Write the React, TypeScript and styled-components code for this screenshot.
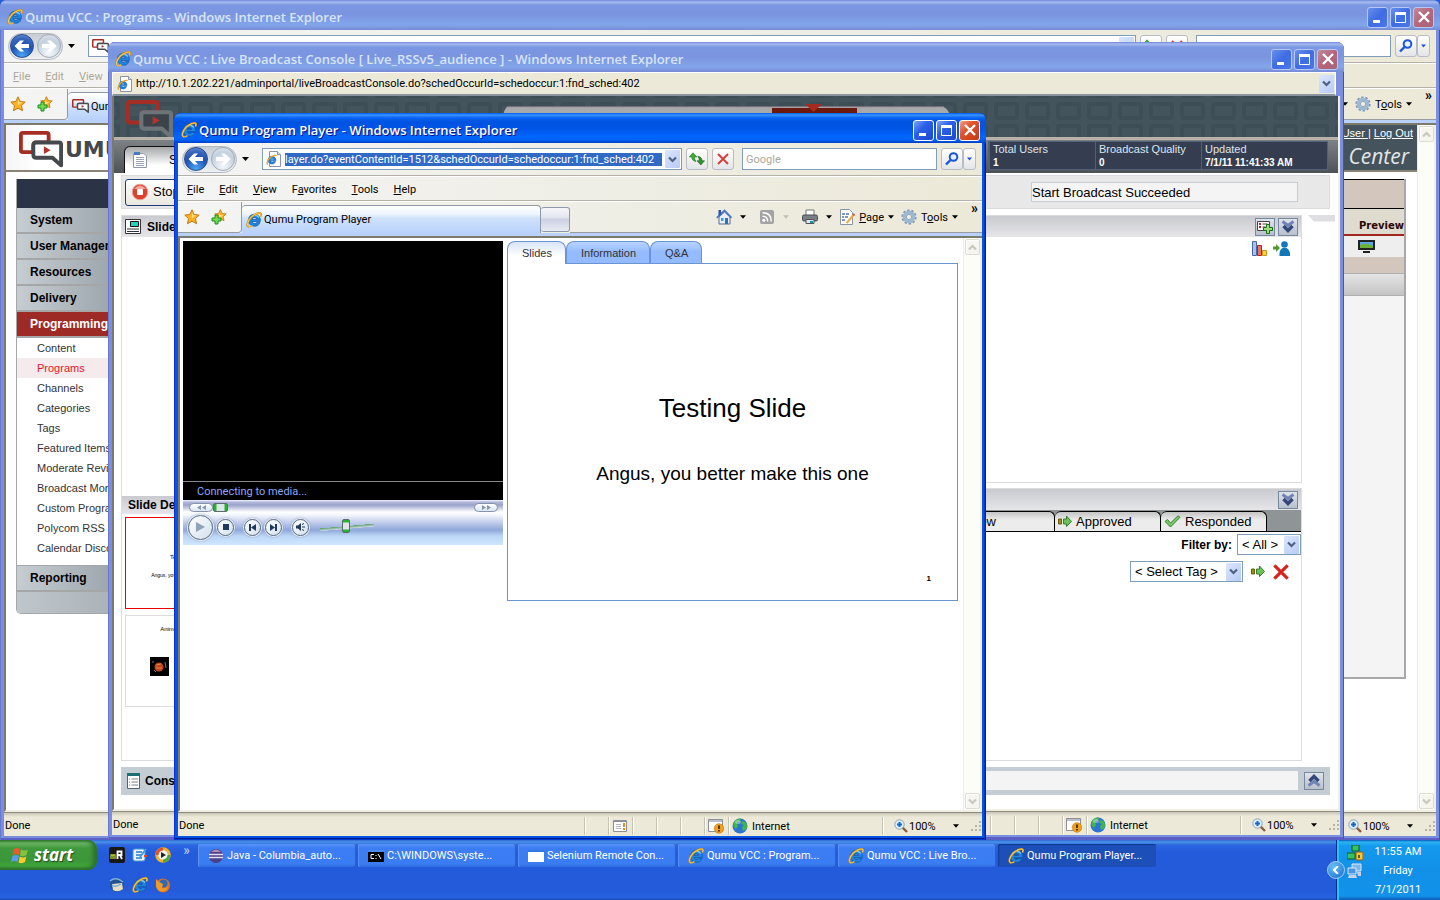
import React from 'react';
import styled, { createGlobalStyle, css } from 'styled-components';

const ui = `Roboto, "Noto Sans", sans-serif`;
const arial = `"Liberation Sans", Arial, sans-serif`;

const GlobalStyle = createGlobalStyle`
  * { box-sizing: border-box; }
  body { margin: 0; font-family: ${ui}; font-size: 11px; color: #000; overflow: hidden; }
  button, input, select { font: inherit; color: inherit; margin: 0; padding: 0; }
  button { background: none; border: 0; white-space: nowrap; }
  a { color: inherit; text-decoration: none; }
  h1, h2, p, ul { margin: 0; padding: 0; font-weight: inherit; }
  ul { list-style: none; }
  svg { display: block; flex: none; }
`;

/* ---------- desktop and window frame ---------- */

const Desktop = styled.div`
  display: flex;
  flex-direction: column;
  height: 100vh;
  min-height: 700px;
  background: #245edb;
`;

const Workspace = styled.main`
  position: relative;
  flex: 1;
  min-height: 0;
`;

const Frame = styled.section<{ $active?: boolean; $inset: string }>`
  position: absolute;
  inset: ${p => p.$inset};
  display: flex;
  flex-direction: column;
  padding: 0 4px 4px;
  border-radius: 7px 7px 0 0;
  overflow: hidden;
  background: ${p => (p.$active ? '#0855dd' : '#7b8fe0')};
  box-shadow: ${p => (p.$active
    ? 'inset 1px 0 #0831d9, inset -1px 0 #001ea0, inset -2px -1px #0439d0, inset 0 -2px #001590'
    : 'inset 1px 0 #6678d0, inset -1px 0 #4a4fb4, inset 0 -2px #5a60c4')};
`;

const TitleBar = styled.header<{ $active?: boolean }>`
  display: flex;
  align-items: center;
  gap: 2px;
  flex: none;
  height: 30px;
  margin: 0 -4px;
  padding: 4px 6px 0 7px;
  color: ${p => (p.$active ? '#fff' : '#d8e4f8')};
  text-shadow: ${p => (p.$active ? '1px 1px #0f1089' : 'none')};
  background: ${p => (p.$active
    ? 'linear-gradient(#0058e6 0, #3a93ff 2px, #0562f0 5px, #0053e0 9px, #0055e8 16px, #0066ff 24px, #0061f5 27px, #003fc4 30px)'
    : 'linear-gradient(#6f86d8 0, #a6bcf2 2px, #7d98e2 5px, #7a94df 14px, #82a5ea 25px, #7f9be3 27px, #7689d4 30px)')};
`;

const Title = styled.h1`
  flex: 1;
  font: 600 13px/20px "Open Sans", "Noto Sans", sans-serif;
  white-space: nowrap;
  overflow: hidden;
`;

const Caption = styled.div`
  display: flex;
  gap: 2px;
`;

const CaptionButton = styled.button<{ $active?: boolean; $close?: boolean }>`
  display: grid;
  place-items: center;
  width: 21px;
  height: 21px;
  border: 1px solid ${p => (p.$active ? '#fff' : '#b5c8f4')};
  border-radius: 3px;
  background: ${p => (p.$close
    ? p.$active ? 'linear-gradient(135deg, #f0a088, #e2502c 40%, #c33a10)' : 'linear-gradient(135deg, #c08a9c, #b4667a 50%, #a86478)'
    : p.$active ? 'linear-gradient(135deg, #7aa4f5, #2c5fe8 40%, #1a48cf)' : 'linear-gradient(135deg, #6a90ee, #3f6ce2 50%, #4a78ea)')};
`;

/* ---------- Internet Explorer chrome ---------- */

const chrome = css`background: linear-gradient(90deg, #f4f4f4, #efeee6 50%, #ece9d8);`;

const AddressRow = styled.div`
  ${chrome}
  display: flex;
  align-items: center;
  flex: none;
  height: 33px;
  padding: 0 6px 0 4px;
  border-bottom: 1px solid #b4b2a8;
`;

const NavPair = styled.div`
  display: flex;
  align-items: center;
  gap: 3px;
  height: 27px;
  padding: 0 1px;
  border-radius: 14px;
  border: 1px solid #b4bac2;
  background: linear-gradient(#c8cdd4, #eef0f2);
`;

const RoundButton = styled.button<{ $blue?: boolean }>`
  display: grid;
  place-items: center;
  width: 24px;
  height: 24px;
  border-radius: 50%;
  border: 1px solid ${p => (p.$blue ? '#2a4a8c' : '#a4abb5')};
  background: ${p => (p.$blue
    ? 'radial-gradient(circle at 50% 95%, #4aa8f4, #1e52b4 50%, #3a68bc 75%, #7ea0dc)'
    : 'radial-gradient(circle at 50% 80%, #f6fafd, #c3d0df 60%, #e4eaf0)')};
`;

const HistoryButton = styled.button`
  display: grid;
  place-items: center;
  width: 16px;
  height: 20px;
  margin-right: 9px;
`;

const Field = styled.div<{ $grow?: boolean }>`
  display: flex;
  align-items: center;
  gap: 3px;
  flex: ${p => (p.$grow ? '1' : '0 0 195px')};
  min-width: 0;
  height: 22px;
  padding: 0 1px 0 3px;
  border: 1px solid #7f9db9;
  background: #fff;
`;

const FieldInput = styled.input<{ $selected?: boolean }>`
  flex: 1;
  min-width: 0;
  height: 13px;
  border: 0;
  outline: 0;
  line-height: 13px;
  color: ${p => (p.$selected ? '#fff' : '#000')};
  background: ${p => (p.$selected ? '#316ac5' : 'transparent')};
  &::placeholder { color: #aca899; opacity: 1; }
`;

const DropButton = styled.span`
  display: grid;
  place-items: center;
  flex: none;
  width: 15px;
  height: 18px;
  border-radius: 1px;
  background: linear-gradient(135deg, #dbe6fd, #b8cbf6);
`;

const SquareButton = styled.button<{ $w?: number }>`
  display: grid;
  place-items: center;
  flex: none;
  width: ${p => p.$w ?? 22}px;
  height: 22px;
  border: 1px solid #b8bcc6;
  border-radius: 3px;
  background: linear-gradient(#fff, #f2f2f0 50%, #e4e5ea);
`;

const AddressTools = styled.div`
  display: flex;
  gap: 4px;
  margin: 0 8px 0 4px;
`;

const SearchTools = styled.div`
  display: flex;
  margin-left: 4px;
`;

const MenuRow = styled.nav<{ $dim?: boolean }>`
  ${chrome}
  display: flex;
  align-items: center;
  gap: 15px;
  flex: none;
  height: 25px;
  padding: 1px 0 0 9px;
  border-top: 1px solid #fff;
  border-bottom: 1px solid #b4b2a8;
  color: ${p => (p.$dim ? '#aca899' : '#000')};
`;

const TabRow = styled.div`
  ${chrome}
  display: flex;
  flex: none;
  height: 32px;
  border-top: 1px solid #fff;
`;

const Favorites = styled.div`
  display: flex;
  align-items: center;
  gap: 11px;
  flex: 0 0 64px;
  padding-left: 6px;
  border-bottom: 1px solid #9a9ca4;
  border-right: 1px solid #8f97ab;
  border-bottom-right-radius: 4px;
`;

const BrowserTab = styled.button`
  display: flex;
  align-items: center;
  gap: 2px;
  flex: 0 1 299px;
  min-width: 0;
  margin-top: 3px;
  padding-left: 4px;
  border: 1px solid #8f97ab;
  border-width: 1px 1px 0 0;
  border-radius: 4px 4px 0 0;
  background: linear-gradient(#fff, #eef5fe 30%, #cfe2fb 45%, #b9d2fb);
`;

const NewTab = styled.button`
  flex: 0 0 29px;
  margin: 5px 0 1px;
  border: 1px solid #8f97ab;
  border-left: 0;
  border-radius: 3px;
  background: linear-gradient(#f6f6fa, #e4e6f0 40%, #cdd1e4 50%, #e9ebf3);
`;

const CommandBar = styled.div`
  display: flex;
  flex: 1;
  align-items: center;
  justify-content: flex-end;
  gap: 7px;
  padding-right: 4px;
  border-bottom: 1px solid #9a9ca4;
`;

const CommandGroup = styled.div`
  display: flex;
  gap: 13px;
`;

const Command = styled.button<{ $label?: boolean }>`
  display: flex;
  align-items: center;
  gap: ${p => (p.$label ? 4 : 8)}px;
`;

const More = styled.button`
  align-self: flex-start;
  margin-left: 6px;
  font: 700 14px/12px ${ui};
`;

const TabStripe = styled.div`
  flex: none;
  height: 5px;
  border-bottom: 2px solid #7d7a6c;
  background: #b9d0f9;
`;

const Viewport = styled.div`
  display: flex;
  flex: 1;
  min-height: 0;
  border-left: 2px solid #7d7a6c;
  border-right: 2px solid #f1efe2;
  border-bottom: 2px solid #f1efe2;
  background: #fff;
`;

const Page = styled.div`
  display: flex;
  flex-direction: column;
  flex: 1;
  min-width: 0;
  overflow: hidden;
  font-family: ${arial};
`;

const ScrollTrack = styled.div`
  display: flex;
  flex-direction: column;
  justify-content: space-between;
  flex: 0 0 17px;
  padding: 1px 0 1px 1px;
  background: #fdfdf8;
  border-left: 1px solid #eeede5;
`;

const ScrollButton = styled.button`
  display: grid;
  place-items: center;
  height: 16px;
  border: 1px solid #dddcd0;
  border-radius: 2px;
  background: #f6f5ee;
  box-shadow: inset 1px 1px #fff;
`;

const StatusRow = styled.footer`
  display: flex;
  flex: none;
  height: 24px;
  padding-top: 2px;
  border-top: 1px solid #8e8b7e;
  background: linear-gradient(#c9c6b8 0, #ece9d8 4px, #ece9d8);
`;

const StatusText = styled.p`
  flex: 1;
  padding-left: 1px;
  line-height: 22px;
`;

const StatusCell = styled.div<{ $w?: number }>`
  display: flex;
  align-items: center;
  gap: 4px;
  flex: 0 0 ${p => p.$w ?? 24}px;
  height: 18px;
  margin-top: 2px;
  padding-left: 3px;
  border-left: 1px solid #c5c2b4;
  box-shadow: inset 1px 0 #fff;
`;

const ZoomButton = styled.button`
  display: flex;
  align-items: center;
  flex: 1;
  gap: 1px;
  padding-left: 8px;
  & > :last-child { margin-left: 16px; }
`;

/* ---------- icons ---------- */

const IeIcon = ({ size = 16 }: { size?: number }) => (
  <svg width={size} height={size} viewBox="0 0 16 16">
    <path d="M8.200 2.200a6 6 0 0 1 6.100 7.300H6q.4 2 2.600 2 1.300 0 2-.9h3.400a6 6 0 1 1-5.800-8.400zM6 7.400h4.700Q10.300 5.400 8.400 5.400T6 7.400z" fill="#1f86e0" stroke="#1158a8" strokeWidth=".7" />
    <path d="M4 6.500Q5.500 3.400 8.500 3.300t4.500 2.200" fill="none" stroke="#7fd0fa" strokeWidth="1.200" />
    <path d="M3 14.800C.2 14.800.8 9.500 5.200 5.200 9 1.500 14 .2 14.900 1.700c.4.7.2 1.700-.4 2.800" fill="none" stroke="#c98312" strokeWidth="1.900" />
    <path d="M3 14.600C.4 14.400 1 9.500 5.200 5.200 9 1.500 14 .2 14.900 1.700c.3.700.1 1.500-.5 2.500" fill="none" stroke="#f8cb3e" strokeWidth="1.100" />
    <path d="M2.500 14.700q1.500.6 4-1" fill="none" stroke="#f0b52c" strokeWidth="1.400" />
  </svg>
);

const PageIe = () => (
  <svg width="16" height="16" viewBox="0 0 16 16">
    <path d="M3.500.5h8l3 3v12h-11z" fill="#fff" stroke="#8b93a5" />
    <path d="M11.500.5v3h3" fill="#dfe3ea" stroke="#8b93a5" />
    <path d="M6 5.200a3.900 3.900 0 0 1 3.900 4.600H4.400q.3 1.200 1.700 1.200.8 0 1.300-.5h2.200A3.900 3.900 0 1 1 6 5.200zM4.400 8.400h3.200Q7.300 7.200 6 7.200T4.400 8.400z" fill="#1e7fdc" stroke="#1463b8" strokeWidth=".5" />
    <path d="M2 13.500C.3 13 1 9.500 4 6.800c2.600-2.300 6-3 6.300-1.800" fill="none" stroke="#e8a31c" strokeWidth="1.300" />
  </svg>
);

const QumuMark = ({ w, line, fill = '#fff' }: { w: number; line: string; fill?: string }) => (
  <svg width={w} height={(w * 40) / 46} viewBox="0 0 46 40">
    <path d="M4 2h25q2 0 2 2v8H18q-3 0-3 3v7H4q-2 0-2-2V4q0-2 2-2z" fill="none" stroke="#a52d24" strokeWidth="4" />
    <path d="M18 12h24q2 0 2 2v22l-9-8H18q-3 0-3-3V15q0-3 3-3z" fill={fill} stroke={line} strokeWidth="4" strokeLinejoin="round" />
    <path d="M26 16l7 4-7 4z" fill="#b5332a" />
  </svg>
);

const Arrow = ({ flip, color = '#fff' }: { flip?: boolean; color?: string }) => (
  <svg width="16" height="14" viewBox="0 0 16 14">
    <path d={flip ? 'M1 5h8L6 1.500h4L15.500 7 10 12.500H6L9 9H1z' : 'M15 5H7l3-3.500H6L.5 7 6 12.500h4L7 9h8z'} fill={color} />
  </svg>
);

const Caret = ({ color = '#000', w = 7 }: { color?: string; w?: number }) => (
  <svg width={w} height="4" viewBox="0 0 7 4"><path d="M0 0h7L3.500 4z" fill={color} /></svg>
);

const Chevron = ({ up, color = '#4d6185' }: { up?: boolean; color?: string }) => (
  <svg width="9" height="7" viewBox="0 0 9 7">
    <path d={up ? 'M1 5.500l3.500-3.500L8 5.500' : 'M1 1.500L4.500 5 8 1.500'} fill="none" stroke={color} strokeWidth="2.200" />
  </svg>
);

const Magnifier = () => (
  <svg width="14" height="14" viewBox="0 0 14 14">
    <circle cx="8.500" cy="5" r="3.800" fill="#e9f1ff" stroke="#1b55d8" strokeWidth="2" />
    <path d="M5.500 8L1 12.500" stroke="#1b55d8" strokeWidth="2.400" />
  </svg>
);

const Refresh = () => (
  <svg width="16" height="14" viewBox="0 0 16 14">
    <path d="M4 .8L7.800 5H5.500q-.2 2.500 1.500 4.500Q2.800 8.800 2.700 5H.3z" fill="#3fae35" stroke="#1f7a22" strokeWidth=".6" />
    <path d="M11.800 13L8 8.800h2.300q.2-2.500-1.500-4.500 4.200.7 4.300 4.500h2.400z" fill="#2f932c" stroke="#1a661c" strokeWidth=".6" />
  </svg>
);

const Cross = ({ size = 12, color = '#d2413c', width = 2 }: { size?: number; color?: string; width?: number }) => (
  <svg width={size} height={size} viewBox="0 0 12 12">
    <path d="M1 1l10 10M11 1L1 11" stroke={color} strokeWidth={width} />
  </svg>
);

const starPath = 'M8 .8l2.200 4.700 5 .6-3.700 3.500 1 5.100L8 12.200l-4.500 2.500 1-5.100L.8 6.100l5-.6z';
const Star = ({ plus }: { plus?: boolean }) => (
  <svg width="16" height="16" viewBox="0 0 16 16">
    <path d={starPath} fill="#fbb224" stroke="#c07a14" strokeLinejoin="round" transform={plus ? 'translate(3 0) scale(.8)' : undefined} />
    <path d="M8 3l1.200 3 3 .5L8 9z" fill="#fff0a8" opacity=".7" />
    {plus && <path d="M4 6h3v3h3v3H7v3H4v-3H1V9h3z" fill="#6fdc4e" stroke="#1f8a24" />}
  </svg>
);

const Home = () => (
  <svg width="16" height="16" viewBox="0 0 16 16">
    <path d="M3 8v7h11V8L8.500 3z" fill="#e9eef7" stroke="#5d6f8e" />
    <path d="M.8 8.800L8.500 1.500l7 7.300" fill="none" stroke="#4a77c8" strokeWidth="1.800" />
    <path d="M2.500 1h2.500v4l-2.500 2z" fill="#2a4fb0" />
    <path d="M9 9h3v6H9z" fill="#2f72b5" /><path d="M5 9h2.500v3H5z" fill="#35a0d8" />
  </svg>
);

const Rss = () => (
  <svg width="16" height="16" viewBox="0 0 16 16">
    <rect x="1" y="1" width="14" height="14" rx="2" fill="#a3a3a3" />
    <circle cx="4.800" cy="11.300" r="1.500" fill="#fff" />
    <path d="M3.500 7.200q5.200 0 5.200 5.300M3.500 3.800q8.800 0 8.800 8.700" fill="none" stroke="#fff" strokeWidth="1.500" />
  </svg>
);

const Printer = () => (
  <svg width="16" height="16" viewBox="0 0 16 16">
    <path d="M4 1h8v6H4z" fill="#fff" stroke="#777" />
    <rect x=".5" y="6" width="15" height="6" rx="1.500" fill="#7b7f86" stroke="#484b50" />
    <path d="M4 10.500h8v4H4z" fill="#dbe7f2" stroke="#555" /><path d="M8 12h3v2H8z" fill="#1f8f9c" />
  </svg>
);

const PageEdit = () => (
  <svg width="16" height="16" viewBox="0 0 16 16">
    <path d="M1.500.5h9l3 3v12h-12z" fill="#fff" stroke="#8b93a5" />
    <path d="M3 5h3M7 5h3M3 8h2M6 8h3M3 11h3" stroke="#5376b4" strokeWidth="1.400" />
    <path d="M14.500 6L9 12.500l-1.500 1.500" stroke="#e2b04a" strokeWidth="2.200" /><path d="M14 5l1.500 1.500" stroke="#c95a4a" strokeWidth="2" />
  </svg>
);

const Gear = () => (
  <svg width="16" height="16" viewBox="0 0 16 16">
    <circle cx="8" cy="8" r="6.600" fill="none" stroke="#7f97b2" strokeWidth="2" strokeDasharray="2.400 1.750" />
    <circle cx="8" cy="8" r="4.600" fill="none" stroke="#9db8d3" strokeWidth="3.400" />
    <circle cx="8" cy="8" r="2.600" fill="#f2efe2" stroke="#7993b0" strokeWidth=".8" />
  </svg>
);

const Globe = () => (
  <svg width="16" height="16" viewBox="0 0 16 16">
    <circle cx="8" cy="8" r="7.500" fill="#2c73d2" />
    <path d="M2 4q3-4 7-3.400l-1 3-3 1.500L6 8 4 11Q0 8 2 4zM10 3l4 1.500q2 4 0 7L11 13l-1-4 2-2-3-1z" fill="#44b54a" />
    <ellipse cx="6" cy="4" rx="3" ry="2" fill="#fff" opacity=".35" />
  </svg>
);

const PrivacyIcon = () => (
  <svg width="16" height="16" viewBox="0 0 16 16">
    <path d="M.5 1.500h14v12H.5z" fill="#fff" stroke="#8a8f98" /><path d="M1 2h13v2H1z" fill="#b9c0cc" />
    <circle cx="11" cy="10.500" r="4.800" fill="#f0a020" stroke="#c07a10" strokeWidth=".6" />
    <path d="M11 7.500v3.500M11 12v1.500" stroke="#4a2a00" strokeWidth="1.800" />
  </svg>
);

const PopupIcon = () => (
  <svg width="16" height="14" viewBox="0 0 16 14">
    <path d="M1.500 1.500h13v11h-13z" fill="#fff" stroke="#8a8f98" /><path d="M2 2.500h12" stroke="#8a8f98" />
    <path d="M4 5.500h5M4 7.500h5M4 9.500h5" stroke="#b6bac2" /><path d="M12 4v4M12 9v2" stroke="#ee8a1a" strokeWidth="2" />
  </svg>
);

const ZoomIcon = () => (
  <svg width="14" height="14" viewBox="0 0 14 14">
    <path d="M8.500 8.500L13 13" stroke="#8a5a3a" strokeWidth="2.400" />
    <circle cx="5.500" cy="5.500" r="4.700" fill="#dff0ff" stroke="#8aa2bc" /><path d="M5.500 3v5M3 5.500h5" stroke="#1466c8" strokeWidth="2" />
  </svg>
);

const Grip = () => (
  <svg width="12" height="12" viewBox="0 0 12 12">
    <path d="M9 1h2v2H9zM5 5h2v2H5zM9 5h2v2H9zM1 9h2v2H1zM5 9h2v2H5zM9 9h2v2H9z" fill="#b8b4a2" />
  </svg>
);

const DoubleChevron = ({ up }: { up?: boolean }) => (
  <svg width="14" height="13" viewBox="0 0 14 13">
    <g transform={up ? 'rotate(180 7 6.500)' : undefined} fill="none" strokeWidth="2.800">
      <path d="M1.500 1.500l5.500 4 5.500-4" stroke="#6f84b4" /><path d="M2.500 6l4.500 4.500L11.500 6" stroke="#34487c" strokeWidth="3.400" />
    </g>
  </svg>
);

const GreenArrow = () => (
  <svg width="14" height="13" viewBox="0 0 14 13">
    <path d="M.5 4h3v5h-3z" fill="#9a8a1a" stroke="#6a5f10" /><path d="M5.500 4h3V1l5 5.500-5 5V9h-3z" fill="#6cc25a" stroke="#3a7d2c" />
  </svg>
);

/* ---------- shared window pieces ---------- */

function WindowTitle({ text, active }: { text: string; active?: boolean }) {
  return (
    <TitleBar $active={active}>
      <IeIcon />
      <Title>{text}</Title>
      <Caption>
        <CaptionButton $active={active} aria-label="Minimize">
          <svg width="15" height="15"><path d="M3 10h7v3H3z" fill="#fff" /></svg>
        </CaptionButton>
        <CaptionButton $active={active} aria-label="Maximize">
          <svg width="15" height="15"><path d="M2.500 3.500h10v9h-10z" fill="none" stroke="#fff" /><path d="M2 2h11v3H2z" fill="#fff" /></svg>
        </CaptionButton>
        <CaptionButton $active={active} $close aria-label="Close"><Cross color="#fff" width={2.4} /></CaptionButton>
      </Caption>
    </TitleBar>
  );
}

const menus = [['', 'F', 'ile'], ['', 'E', 'dit'], ['', 'V', 'iew'], ['F', 'a', 'vorites'], ['', 'T', 'ools'], ['', 'H', 'elp']];

function BrowserChrome({ address, selected, icon, tabIcon, tab, dim, search }: {
  address: string; selected?: boolean; icon: React.ReactNode; tabIcon: React.ReactNode; tab: string; dim?: boolean; search?: string;
}) {
  return (
    <>
      <AddressRow>
        <NavPair>
          <RoundButton $blue aria-label="Back"><Arrow /></RoundButton>
          <RoundButton aria-label="Forward"><Arrow flip /></RoundButton>
        </NavPair>
        <HistoryButton aria-label="Recent pages"><Caret /></HistoryButton>
        <Field $grow>
          {icon}
          <FieldInput $selected={selected} aria-label="Address" defaultValue={address} />
          <DropButton><Chevron /></DropButton>
        </Field>
        <AddressTools>
          <SquareButton aria-label="Refresh"><Refresh /></SquareButton>
          <SquareButton aria-label="Stop"><Cross /></SquareButton>
        </AddressTools>
        <Field><FieldInput aria-label="Search" placeholder={search} /></Field>
        <SearchTools>
          <SquareButton aria-label="Search"><Magnifier /></SquareButton>
          <SquareButton $w={13} aria-label="Search options"><Caret color="#1b55d8" w={5} /></SquareButton>
        </SearchTools>
      </AddressRow>
      <MenuRow $dim={dim}>
        {menus.map(([a, u, b]) => <button key={u}>{a}<u>{u}</u>{b}</button>)}
      </MenuRow>
      <TabRow>
        <Favorites>
          <button aria-label="Favorites Center"><Star /></button>
          <button aria-label="Add to Favorites"><Star plus /></button>
        </Favorites>
        <BrowserTab>{tabIcon}{tab}</BrowserTab>
        <NewTab aria-label="New tab" />
        <CommandBar>
          <CommandGroup>
            <Command aria-label="Home"><Home /><Caret w={6} /></Command>
            <Command aria-label="Feeds"><Rss /><Caret w={6} color="#c0beb4" /></Command>
            <Command aria-label="Print"><Printer /><Caret w={6} /></Command>
          </CommandGroup>
          <Command $label><PageEdit /><span><u>P</u>age</span><Caret w={6} /></Command>
          <Command $label><Gear /><span>T<u>o</u>ols</span><Caret w={6} /></Command>
          <More aria-label="More commands">»</More>
        </CommandBar>
      </TabRow>
      <TabStripe />
    </>
  );
}

function StatusBar({ popup }: { popup?: boolean }) {
  return (
    <StatusRow>
      <StatusText>Done</StatusText>
      <StatusCell />
      <StatusCell>{popup && <PopupIcon />}</StatusCell>
      <StatusCell /><StatusCell /><StatusCell />
      <StatusCell><PrivacyIcon /></StatusCell>
      <StatusCell $w={154}><Globe />Internet</StatusCell>
      <StatusCell $w={100}>
        <ZoomButton><ZoomIcon />100%<Caret w={6} /></ZoomButton>
        <Grip />
      </StatusCell>
    </StatusRow>
  );
}

const VScroll = () => (
  <ScrollTrack>
    <ScrollButton aria-label="Scroll up"><Chevron up color="#c9c8bd" /></ScrollButton>
    <ScrollButton aria-label="Scroll down"><Chevron color="#c9c8bd" /></ScrollButton>
  </ScrollTrack>
);

/* ---------- programs page ---------- */

const SiteHeader = styled.header`
  display: flex;
  justify-content: space-between;
  flex: none;
  height: 47px;
  border-bottom: 2px solid #8b8378;
  background: linear-gradient(90deg, #f4f4f4, #fff 30px);
`;

const Brand = styled.div`
  display: flex;
  align-items: center;
  gap: 2px;
  padding: 5px 0 0 13px;
  font: 700 22px/40px "DejaVu Sans", sans-serif;
  color: #45484c;
`;

const SiteBanner = styled.div`
  display: flex;
  flex-direction: column;
  width: 50%;
  padding-right: 4px;
  text-align: right;
  color: #fff;
  background: #44535c;
`;

const UserLinks = styled.p`
  font-size: 11px;
  line-height: 16px;
  a { text-decoration: underline; }
`;

const BannerTitle = styled.p`
  padding-right: 4px;
  font: italic 21px/30px "Open Sans", "Noto Sans", sans-serif;
  color: #e4e6e8;
`;

const SiteBody = styled.div`
  display: flex;
  gap: 10px;
  padding: 7px 11px 0 10px;
`;

const SideNav = styled.nav`
  flex: 0 0 180px;
  align-self: flex-start;
  border: 1px solid #a4a6a8;
  border-width: 0 0 1px 1px;
  border-radius: 0 0 0 5px;
  overflow: hidden;
`;

const NavTop = styled.div`
  height: 29px;
  background: #2b3447;
`;

const NavHead = styled.a<{ $on?: boolean }>`
  display: block;
  height: 26px;
  padding-left: 13px;
  border-bottom: 2px solid #a4a6a8;
  font: 700 12px/24px ${arial};
  color: ${p => (p.$on ? '#fff' : '#000')};
  background: ${p => (p.$on ? '#9d2a25' : 'linear-gradient(90deg, #c6cdd2, #8d979e 130px)')};
`;

const NavList = styled.ul`
  padding-bottom: 7px;
  border-bottom: 1px solid #a4a6a8;
`;

const NavLink = styled.a<{ $on?: boolean }>`
  display: block;
  padding-left: 20px;
  font-size: 11px;
  line-height: 20px;
  color: ${p => (p.$on ? '#e8122c' : '#333')};
  background: ${p => (p.$on ? '#f5eaec' : 'none')};
`;

const NavFoot = styled.div`
  height: 21px;
  background: linear-gradient(90deg, #bfc7cc, #98a0a6);
`;

const ListPanel = styled.div`
  flex: 1;
  min-height: 500px;
  border: 2px solid #a8a8a8;
  border-width: 0 2px 2px 0;
  background: #f4f4f4;
`;

const Listing = styled.table`
  width: 100%;
  border-collapse: collapse;
  th, td { padding: 0; }
`;

const ListCaption = styled.caption`
  height: 30px;
  border: 1px solid #000;
  border-width: 1px 0;
  background: #d2c6bd;
`;

const HeadCell = styled.th`
  height: 26px;
  border-bottom: 2px solid #a3261e;
  text-align: right;
  vertical-align: bottom;
  font: 700 10px/16px "DejaVu Sans", sans-serif;
  color: #2c0505;
  background: #dfdccf;
`;

const RowCell = styled.td`
  height: 22px;
  background: #eee;
  svg { margin-left: auto; margin-right: 29px; }
`;

const BeigeStrip = styled.div`
  height: 16px;
  background: #d2c6bd;
`;

const GreyStrip = styled.div`
  height: 23px;
  border: 1px solid #b0b0b0;
  border-width: 1px 0;
  background: linear-gradient(#e4e4e4, #c4c4c4);
`;

const subPages = ['Content', 'Programs', 'Channels', 'Categories', 'Tags', 'Featured Items', 'Moderate Reviews',
  'Broadcast Monitor', 'Custom Programs', 'Polycom RSS Discovery', 'Calendar Discovery'];

function ProgramsWindow() {
  return (
    <Frame $inset="0">
      <WindowTitle text="Qumu VCC : Programs - Windows Internet Explorer" />
      <BrowserChrome address="http://10.1.202.221/adminportal/programs.do" icon={<QumuMark w={17} line="#4a4d52" />}
        tabIcon={<QumuMark w={17} line="#4a4d52" />} tab="Qumu VCC : Programs" dim />
      <Viewport>
        <Page>
          <SiteHeader>
            <Brand><QumuMark w={44} line="#45484c" />UMU</Brand>
            <SiteBanner>
              <UserLinks><a href="#user">Qumu User </a> | <a href="#logout">Log Out</a></UserLinks>
              <BannerTitle>Control Center</BannerTitle>
            </SiteBanner>
          </SiteHeader>
          <SiteBody>
            <SideNav>
              <NavTop />
              {['System', 'User Management', 'Resources', 'Delivery'].map(n => <NavHead key={n} href="#nav">{n}</NavHead>)}
              <NavHead $on href="#programming">Programming</NavHead>
              <NavList>
                {subPages.map(n => <li key={n}><NavLink $on={n === 'Programs'} href="#page">{n}</NavLink></li>)}
              </NavList>
              <NavHead href="#reporting">Reporting</NavHead>
              <NavFoot />
            </SideNav>
            <ListPanel>
              <Listing>
                <ListCaption />
                <thead><tr><HeadCell scope="col">Preview</HeadCell></tr></thead>
                <tbody>
                  <tr>
                    <RowCell>
                      <svg width="17" height="13" viewBox="0 0 17 13">
                        <path d="M0 0h17v10H0z" fill="#222" /><path d="M2 2h13v6H2z" fill="#5aa6e0" /><path d="M2 5q6-3 13 1v2H2z" fill="#6fae3a" /><path d="M5 11h7v2H5z" fill="#222" />
                      </svg>
                    </RowCell>
                  </tr>
                </tbody>
              </Listing>
              <BeigeStrip />
              <GreyStrip />
            </ListPanel>
          </SiteBody>
        </Page>
        <VScroll />
      </Viewport>
      <StatusBar />
    </Frame>
  );
}

/* ---------- live broadcast console ---------- */

const UrlRow = styled.div`
  display: flex;
  align-items: center;
  gap: 3px;
  flex: none;
  height: 24px;
  margin-right: 4px;
  padding: 0 1px 0 4px;
  border: 1px solid #fff;
  border-bottom: 2px solid #8a94a0;
  background: #ece9d8;
`;

const Masthead = styled.header`
  position: relative;
  flex: none;
  height: 44px;
  padding: 4px 12px 0;
  overflow: hidden;
  border-bottom: 3px solid #b8b2a8;
  background: #44545d;
`;

const MastPattern = styled.svg`
  position: absolute;
  inset: 0;
  width: 100%;
  height: 100%;
`;

const MastLogo = styled.div`
  position: relative;
`;

const MastNav = styled.div`
  position: absolute;
  left: 389px;
  top: 7px;
`;

const StatusBand = styled.div`
  display: flex;
  justify-content: space-between;
  align-items: flex-start;
  flex: none;
  height: 33px;
  padding: 1px 10px 0;
  background: linear-gradient(#7d8286, #4d5257);
`;

const ConsoleTab = styled.button`
  display: flex;
  align-items: center;
  gap: 22px;
  width: 160px;
  height: 27px;
  margin-top: 5px;
  padding-left: 8px;
  border: 1px solid #111;
  border-width: 1px 1px 0;
  border-radius: 6px 6px 0 0;
  font: 12px/16px ${arial};
  background: linear-gradient(#a4a6a8, #fff 18px);
`;

const Stats = styled.dl`
  display: grid;
  grid-template-columns: 106px 106px 126px;
  margin: 0;
  border: 1px solid #536078;
  color: #dfe5ee;
  font-size: 10px;
  line-height: 13px;
  background: #343e50;
  div { padding: 1px 3px 0; height: 27px; border-left: 1px solid #536078; }
  dt { font-size: 11px; }
  dd { margin: 0; font-weight: 700; color: #fff; }
`;

const ConsoleBody = styled.div`
  display: flex;
  flex-direction: column;
  flex: 1;
  gap: 6px;
  min-height: 0;
  padding: 2px 8px 14px 7px;
`;

const ActionBar = styled.div`
  display: flex;
  align-items: center;
  justify-content: space-between;
  flex: none;
  height: 34px;
  padding: 0 31px 0 3px;
  border: 1px solid #dcdcdc;
  background: #e8e8e8;
`;

const StopButton = styled.button`
  display: flex;
  align-items: center;
  gap: 4px;
  width: 130px;
  height: 27px;
  padding-left: 5px;
  border: 1px solid #1b3c74;
  border-radius: 3px;
  font: 13px/16px ${arial};
  background: linear-gradient(#fff, #e9e7df);
`;

const Message = styled.input`
  width: 267px;
  height: 20px;
  border: 1px solid #c4ccd4;
  font: 13px/16px ${arial};
  background: #f4f4f4;
`;

const Panels = styled.div`
  display: flex;
  flex: 1;
  gap: 6px;
  min-height: 0;
  margin-right: -5px;
`;

const PanelColumn = styled.div`
  display: flex;
  flex-direction: column;
  gap: 5px;
  flex: 1;
  min-width: 0;
`;

const Panel = styled.section<{ $h?: number }>`
  display: flex;
  flex-direction: column;
  flex: ${p => (p.$h ? `0 0 ${p.$h}px` : '1')};
  min-height: 0;
  border: 1px solid #dcdcdc;
`;

const PanelHead = styled.header<{ $small?: boolean }>`
  display: flex;
  align-items: center;
  justify-content: flex-end;
  gap: 3px;
  flex: none;
  height: ${p => (p.$small ? 18 : 21)}px;
  padding: 0 3px;
  background: linear-gradient(#c9cacf, #e6e6e9);
`;

const PanelTitle = styled.h2`
  flex: 1;
  padding-left: 3px;
  font: 700 12px/18px ${arial};
`;

const BevelButton = styled.button`
  display: grid;
  place-items: center;
  width: 20px;
  height: 18px;
  border: 1px solid #76889e;
  background: linear-gradient(#dfe3ea, #b8c0cc);
`;

const PanelBody = styled.div<{ $h?: number }>`
  display: flex;
  justify-content: flex-end;
  align-items: flex-start;
  gap: 6px;
  flex: ${p => (p.$h ? `0 0 ${p.$h}px` : '1')};
  padding: 4px 11px 0 3px;
`;

const Deck = styled.div`
  display: flex;
  flex-direction: column;
  gap: 6px;
  padding: 3px;
`;

const Thumb = styled.div<{ $on?: boolean }>`
  display: flex;
  flex-direction: column;
  align-items: center;
  gap: ${p => (p.$on ? 8 : 23)}px;
  width: 124px;
  height: 92px;
  padding-top: ${p => (p.$on ? 34 : 8)}px;
  border: 1px solid ${p => (p.$on ? '#e00' : '#dcdcdc')};
  font-size: 6px;
  line-height: 10px;
  white-space: nowrap;
  small { font-size: 5px; }
  svg { align-self: flex-start; margin-left: 24px; }
`;

const QueueTabs = styled.div`
  display: flex;
  justify-content: flex-end;
  align-items: flex-end;
  flex: none;
  height: 22px;
  padding-right: 34px;
  border-bottom: 1px solid #000;
  background: #8f9496;
`;

const QueueTab = styled.button`
  display: flex;
  align-items: center;
  gap: 4px;
  width: 106px;
  height: 20px;
  padding-left: 3px;
  border: 1px solid #000;
  border-width: 1px 1px 0 0;
  border-radius: 6px 6px 0 0;
  font: 13px/16px ${arial};
  background: linear-gradient(#c4c4c4, #ececec 8px);
`;

const Filters = styled.div`
  display: flex;
  flex-direction: column;
  align-items: flex-end;
  gap: 6px;
  padding-top: 2px;
`;

const FilterLine = styled.div<{ $inset?: boolean }>`
  display: flex;
  align-items: center;
  gap: ${p => (p.$inset ? 8 : 5)}px;
  padding-right: ${p => (p.$inset ? 12 : 0)}px;
  label { font: 700 12px/16px ${arial}; }
`;

const SelectBox = styled.span<{ $w: number }>`
  display: grid;
  align-items: center;
  width: ${p => p.$w}px;
  height: 21px;
  padding-right: 1px;
  border: 1px solid #7f9db9;
  background: #fff;
  & > * { grid-area: 1 / 1; }
  select { appearance: none; width: 100%; padding-left: 4px; border: 0; background: none; font: 13px/17px ${arial}; }
  span { justify-self: end; pointer-events: none; }
`;

const ConsoleStrip = styled.div`
  display: flex;
  align-items: center;
  gap: 5px;
  flex: none;
  height: 28px;
  padding: 0 6px;
  border-bottom: 1px solid #c4ccd4;
  background: #c4cdd4;
  label { width: 70px; font: 700 12px/16px ${arial}; }
`;

const ConsoleInput = styled.input`
  flex: 1;
  height: 21px;
  border: 1px solid #c4ccd4;
  background: #f4f4f4;
`;

function ConsoleWindow() {
  return (
    <Frame $inset="42px 96px 1px 108px">
      <WindowTitle text="Qumu VCC : Live Broadcast Console [ Live_RSSv5_audience ] - Windows Internet Explorer" />
      <UrlRow>
        <PageIe />
        <FieldInput aria-label="Console address" defaultValue="http://10.1.202.221/adminportal/liveBroadcastConsole.do?schedOccurId=schedoccur:1:fnd_sched:402" />
        <DropButton><Chevron /></DropButton>
      </UrlRow>
      <Viewport>
        <Page>
          <Masthead>
            <MastPattern>
              <defs>
                <pattern id="tiles" width="31" height="22" x="12" y="5" patternUnits="userSpaceOnUse">
                  <rect x="2" y="3" width="21" height="14" rx="1" fill="none" stroke="#3e4e57" strokeWidth="4" />
                </pattern>
              </defs>
              <rect width="100%" height="100%" fill="url(#tiles)" />
            </MastPattern>
            <MastLogo><QumuMark w={47} line="#6d7478" fill="#3a444a" /></MastLogo>
            <MastNav>
              <svg width="448" height="14" viewBox="0 0 448 14">
                <path d="M4 4h436q4 0 8 10H0q1-8 4-10z" fill="#a6aaad" /><path d="M4 4h437" stroke="#a89098" />
                <path d="M269 5h85v9h-85z" fill="#6a190f" /><path d="M302 1h17l-8.500 8z" fill="#a52a1f" />
              </svg>
            </MastNav>
          </Masthead>
          <StatusBand>
            <ConsoleTab>
              <svg width="14" height="16" viewBox="0 0 14 16">
                <path d="M.5 1.500h10l3 2v12H.5z" fill="#fff" stroke="#8d98a8" /><path d="M1 0h6v3H1z" fill="#4a7ac4" />
                <path d="M3 5.500h8M3 7.500h8M3 9.500h8M3 11.500h8M3 13.500h8" stroke="#9aa4b2" />
              </svg>
              Studio
            </ConsoleTab>
            <Stats>
              <div><dt>Total Users</dt><dd>1</dd></div>
              <div><dt>Broadcast Quality</dt><dd>0</dd></div>
              <div><dt>Updated</dt><dd>7/1/11 11:41:33 AM</dd></div>
            </Stats>
          </StatusBand>
          <ConsoleBody>
            <ActionBar>
              <StopButton>
                <svg width="18" height="18" viewBox="0 0 18 18">
                  <circle cx="9" cy="9" r="7.800" fill="#d8432f" stroke="#e8a49a" /><path d="M3 6q6-7 12 0z" fill="#f2a99d" /><rect x="6" y="6" width="6" height="6" rx="1" fill="#fff" />
                </svg>
                Stop Broadcast
              </StopButton>
              <Message aria-label="Console message" readOnly value="Start Broadcast Succeeded" />
            </ActionBar>
            <Panels>
              <PanelColumn>
                <Panel>
                  <PanelHead>
                    <svg width="16" height="15" viewBox="0 0 16 15">
                      <path d="M.5.500h15v14H.5z" fill="#fff" stroke="#333" /><path d="M5.500 2.500h8v5h-8z" fill="#1fd6b8" stroke="#111" /><path d="M2 10h12M2 12.500h12" stroke="#333" />
                    </svg>
                    <PanelTitle>Slide Viewer</PanelTitle>
                  </PanelHead>
                  <PanelBody $h={259} />
                  <PanelHead $small><PanelTitle>Slide Deck</PanelTitle></PanelHead>
                  <Deck>
                    <Thumb $on><span>Testing Slide</span><small>Angus, you better make this one</small></Thumb>
                    <Thumb>
                      <span>Animation and more</span>
                      <svg width="19" height="19" viewBox="0 0 19 19"><path d="M0 0h19v19H0z" fill="#000" /><circle cx="9" cy="10" r="4.500" fill="#c0451c" /><path d="M6 8l5-1M6 11h6" stroke="#e8864a" /><path d="M3 4v2M4 13l2 2M15 5l1 6" stroke="#777" /></svg>
                    </Thumb>
                  </Deck>
                </Panel>
              </PanelColumn>
              <PanelColumn>
                <Panel $h={268}>
                  <PanelHead>
                    <BevelButton aria-label="Add poll">
                      <svg width="16" height="14" viewBox="0 0 16 14"><path d="M.5 1.500h12v9H.5z" fill="#fff" stroke="#444" /><path d="M2 4h2M2 7h2" stroke="#b02020" strokeWidth="2" /><path d="M5.500 4h5M5.500 7h3" stroke="#444" /><path d="M9.500 4.500h3v3h3v3h-3v3h-3v-3h-3v-3h3z" fill="#9be07a" stroke="#176b1a" /></svg>
                    </BevelButton>
                    <BevelButton aria-label="Collapse audience"><DoubleChevron /></BevelButton>
                  </PanelHead>
                  <PanelBody>
                    <svg width="15" height="15" viewBox="0 0 15 15"><path d="M.5.500h4v14h-4z" fill="#a9c0ea" stroke="#4768a8" /><path d="M5.500 4.500h4v10h-4z" fill="#e87468" stroke="#b8201c" /><path d="M10.500 9.500h4v5h-4z" fill="#fbd34a" stroke="#d09214" /></svg>
                    <svg width="17" height="15" viewBox="0 0 17 15"><circle cx="11.500" cy="3.500" r="3.300" fill="#1277b8" /><path d="M6.500 15q-.5-6 3-8h4q4 2 3.500 8z" fill="#1277b8" /><path d="M0 5.500h3V3l4 4-4 4V8.500H0z" fill="#4f9a2e" /></svg>
                  </PanelBody>
                </Panel>
                <Panel>
                  <PanelHead><BevelButton aria-label="Collapse questions"><DoubleChevron /></BevelButton></PanelHead>
                  <QueueTabs>
                    <QueueTab><GreenArrow />New</QueueTab>
                    <QueueTab><GreenArrow />Approved</QueueTab>
                    <QueueTab>
                      <svg width="17" height="13" viewBox="0 0 17 13"><path d="M1 6.500l2.500-2L6.500 8 14 .8l2 1.500L6.500 12z" fill="#7cc96a" stroke="#34802c" /></svg>
                      Responded
                    </QueueTab>
                  </QueueTabs>
                  <Filters>
                    <FilterLine>
                      <label htmlFor="filter">Filter by:</label>
                      <SelectBox $w={64}><select id="filter"><option>&lt; All &gt;</option></select><DropButton><Chevron /></DropButton></SelectBox>
                    </FilterLine>
                    <FilterLine $inset>
                      <SelectBox $w={113}><select aria-label="Tag"><option>&lt; Select Tag &gt;</option></select><DropButton><Chevron /></DropButton></SelectBox>
                      <button aria-label="Apply tag"><GreenArrow /></button>
                      <button aria-label="Remove tag"><Cross size={16} color="#d8221e" width={2.4} /></button>
                    </FilterLine>
                  </Filters>
                </Panel>
              </PanelColumn>
              <svg width="27" height="7" viewBox="0 0 27 7"><path d="M0 0h27v6.500H6z" fill="#dedee2" /></svg>
            </Panels>
            <ConsoleStrip>
              <svg width="13" height="16" viewBox="0 0 13 16"><path d="M.5.500h12v15H.5z" fill="#fff" stroke="#55636e" /><path d="M0 0h13v3H0z" fill="#1d6f74" /><path d="M2 6h1M4.500 6H11M2 9h1M4.500 9H11M2 12h1M4.500 12H11" stroke="#7a858e" /></svg>
              <label htmlFor="console">Console</label>
              <ConsoleInput id="console" readOnly />
              <BevelButton aria-label="Expand console"><DoubleChevron up /></BevelButton>
            </ConsoleStrip>
          </ConsoleBody>
        </Page>
      </Viewport>
      <StatusBar />
    </Frame>
  );
}

/* ---------- program player ---------- */

const PlayerPage = styled.div`
  display: flex;
  align-items: flex-start;
  gap: 4px;
  padding: 3px 5px 0 3px;
`;

const Player = styled.div`
  flex: 0 0 320px;
`;

const Video = styled.div`
  display: flex;
  flex-direction: column;
  justify-content: flex-end;
  height: 259px;
  background: #000;
`;

const VideoStatus = styled.p`
  height: 19px;
  padding-left: 14px;
  border-top: 1px solid #888;
  font: 11px/19px ${ui};
  color: #8fa4f8;
`;

const Controls = styled.div`
  height: 45px;
  padding: 3px 5px 0 6px;
  background: linear-gradient(#f4f7ff 0, #b4bbdc 2px, #9aa2cc 5px, #fff 12px, #f4f6fc 15px, #c4cfec 22px, #8ea8da 30px, #bcd6f6 36px, #cfe6ff 45px);
`;

const SeekRow = styled.div`
  display: flex;
  align-items: center;
  height: 9px;
`;

const Pill = styled.button`
  display: grid;
  place-items: center;
  width: 24px;
  height: 9px;
  border: 1px solid #8793a8;
  border-radius: 5px;
  background: linear-gradient(#fff, #d9e6f4);
`;

const Slider = styled.input<{ $seek?: boolean }>`
  appearance: none;
  ${p => (p.$seek ? 'flex: 1; min-width: 0; height: 9px;' : 'width: 54px; height: 16px; margin-left: 11px;')}
  background: none;
  &::-webkit-slider-runnable-track {
    display: flex;
    align-items: center;
    height: ${p => (p.$seek ? 9 : 16)}px;
    background: ${p => (p.$seek ? 'none' : 'linear-gradient(175deg, transparent 45%, #62a86a 46%, #c9d2e4 58%, transparent 60%)')};
  }
  &::-webkit-slider-thumb {
    appearance: none;
    width: ${p => (p.$seek ? 15 : 8)}px;
    height: ${p => (p.$seek ? 9 : 14)}px;
    border: 1px solid #5d6b6d;
    border-radius: 2px;
    background: linear-gradient(${p => (p.$seek ? '90deg' : '180deg')}, #25b52a 2px, #dfe6ea 3px, #dfe6ea calc(100% - 3px), #25b52a calc(100% - 2px));
  }
`;

const ButtonRow = styled.div`
  display: flex;
  align-items: center;
  height: 30px;
`;

const MediaGroup = styled.div`
  display: flex;
  align-items: center;
  gap: 4px;
  margin-right: 10px;
`;

const MediaButton = styled.button<{ $big?: boolean }>`
  display: grid;
  place-items: center;
  width: ${p => (p.$big ? 25 : 17)}px;
  height: ${p => (p.$big ? 25 : 17)}px;
  margin-left: ${p => (p.$big ? -1 : 0)}px;
  border: 1px solid #5f7186;
  border-radius: 50%;
  box-shadow: 0 0 0 1px #e6ecf6, 0 0 2px 1px #8f9cc0;
  background: linear-gradient(135deg, #fff, #d2e0ee);
`;

const SlideArea = styled.div`
  flex: 1;
  min-width: 0;
`;

const SlideTabs = styled.div`
  display: flex;
  height: 23px;
  color: #333;
`;

const SlideTab = styled.button<{ $on?: boolean }>`
  position: relative;
  height: ${p => (p.$on ? 23 : 22)}px;
  padding: 0 13px 0 14px;
  border: 1px solid #6a94d4;
  border-bottom: 0;
  border-radius: 8px 8px 0 0;
  font: 11px/20px ${arial};
  background: ${p => (p.$on ? 'linear-gradient(#d9e4f5, #fff 14px)' : 'linear-gradient(#b9d4ff, #94bbff 10px)')};
`;

const SlidePanel = styled.div`
  display: flex;
  flex-direction: column;
  align-items: center;
  aspect-ratio: 451 / 338;
  margin-top: -1px;
  padding: 128px 26px 15px 26px;
  border: 1px solid #6a94d4;
`;

const SlideTitle = styled.h2`
  font: 26px/32px ${arial};
`;

const SlideSubtitle = styled.p`
  margin-top: 38px;
  font: 19px/24px ${arial};
`;

const SlideNumber = styled.p`
  margin: auto 0 0 auto;
  font: 700 8px/12px ${arial};
`;

function PlayerWindow() {
  return (
    <Frame $active $inset="113px 454px 0 174px">
      <WindowTitle active text="Qumu Program Player - Windows Internet Explorer" />
      <BrowserChrome address="layer.do?eventContentId=1512&schedOccurId=schedoccur:1:fnd_sched:402" selected icon={<PageIe />}
        tabIcon={<IeIcon />} tab="Qumu Program Player" search="Google" />
      <Viewport>
        <Page>
          <PlayerPage>
            <Player>
              <Video><VideoStatus>Connecting to media...</VideoStatus></Video>
              <Controls>
                <SeekRow>
                  <Pill aria-label="Rewind"><svg width="9" height="5"><path d="M4 0v5L0 2.500zM9 0v5L5 2.500z" fill="#8797ab" /></svg></Pill>
                  <Slider $seek type="range" aria-label="Seek" defaultValue={0} />
                  <Pill aria-label="Fast forward"><svg width="9" height="5"><path d="M0 0v5l4-2.500zM5 0v5l4-2.500z" fill="#8797ab" /></svg></Pill>
                </SeekRow>
                <ButtonRow>
                  <MediaGroup>
                    <MediaButton $big aria-label="Play"><svg width="9" height="10"><path d="M0 0v10l9-5z" fill="#8fa3b8" /></svg></MediaButton>
                    <MediaButton aria-label="Stop"><svg width="6" height="6"><path d="M0 0h6v6H0z" fill="#1f3a5c" /></svg></MediaButton>
                  </MediaGroup>
                  <MediaGroup>
                    <MediaButton aria-label="Previous"><svg width="7" height="7"><path d="M0 0h2v7H0zM7 0v7L2 3.500z" fill="#1f3a5c" /></svg></MediaButton>
                    <MediaButton aria-label="Next"><svg width="7" height="7"><path d="M5 0h2v7H5zM0 0v7l5-3.500z" fill="#1f3a5c" /></svg></MediaButton>
                  </MediaGroup>
                  <MediaButton aria-label="Mute"><svg width="9" height="8"><path d="M0 2.500h2L5 0v8L2 5.500H0z" fill="#1f3a5c" /><path d="M6 1.500l2-1M6 4h3M6 6.500l2 1" stroke="#1f3a5c" /></svg></MediaButton>
                  <Slider type="range" aria-label="Volume" defaultValue={48} />
                </ButtonRow>
              </Controls>
            </Player>
            <SlideArea>
              <SlideTabs>
                <SlideTab $on>Slides</SlideTab>
                <SlideTab>Information</SlideTab>
                <SlideTab>Q&amp;A</SlideTab>
              </SlideTabs>
              <SlidePanel>
                <SlideTitle>Testing Slide</SlideTitle>
                <SlideSubtitle>Angus, you better make this one</SlideSubtitle>
                <SlideNumber>1</SlideNumber>
              </SlidePanel>
            </SlideArea>
          </PlayerPage>
        </Page>
        <VScroll />
      </Viewport>
      <StatusBar popup />
    </Frame>
  );
}

/* ---------- taskbar ---------- */

const TaskbarRoot = styled.footer`
  display: flex;
  align-items: flex-start;
  flex: none;
  height: 60px;
  color: #fff;
  background: linear-gradient(#3168d5 0, #4993e6 2px, #2b66e0 5px, #245bdb 12px, #245bdb 50px, #2663e0 58px, #1941a5 60px);
`;

const StartButton = styled.button`
  display: flex;
  align-items: center;
  gap: 5px;
  flex: 0 0 97px;
  height: 30px;
  padding-left: 11px;
  border-radius: 0 9px 9px 0;
  font: italic 700 17px/24px "Open Sans", sans-serif;
  color: #fff;
  text-shadow: 1px 1px 1px #234d20;
  background: linear-gradient(#2f7a2c 0, #6db567 3px, #3f9a3c 8px, #3c963a 20px, #3da33a 26px, #2b6c2a 30px);
  box-shadow: inset -4px 0 4px #2b722a;
`;

const QuickLaunch = styled.div`
  display: grid;
  grid-template-columns: repeat(3, 16px);
  gap: 14px 7px;
  padding: 7px 0 0 12px;
`;

const QuickMore = styled.button`
  width: 27px;
  padding-left: 4px;
  font: 14px/20px ${ui};
  color: #bcd2fa;
`;

const Tasks = styled.div`
  display: flex;
  flex: 1;
  gap: 2px;
  min-width: 0;
  padding-top: 4px;
`;

const Task = styled.button<{ $on?: boolean }>`
  display: flex;
  align-items: center;
  gap: 3px;
  flex: 0 1 158px;
  min-width: 0;
  height: 23px;
  padding-left: 10px;
  overflow: hidden;
  border-radius: 2px;
  background: ${p => (p.$on ? '#1c4fb8' : 'linear-gradient(#5a94f8 0, #3c7df4 4px, #3a7cf2 20px, #2f6ce4)')};
  box-shadow: ${p => (p.$on ? 'inset 1px 1px 1px #123a90' : 'inset 1px 0 #5c92f6, inset -1px 0 #2a5fcc')};
`;

const Tray = styled.div`
  display: flex;
  align-items: center;
  flex: 0 0 104px;
  height: 60px;
  border-left: 1px solid #0b2f8c;
  background: linear-gradient(#0c59b9 0, #2bb4f2 2px, #149aee 6px, #1290e8 30px, #1292ea 56px, #0b5ab4 60px);
  box-shadow: inset 2px 0 #2cc0f6;
`;

const TrayToggle = styled.button`
  display: grid;
  place-items: center;
  flex: none;
  width: 18px;
  height: 18px;
  margin-left: -10px;
  border: 1px solid #9fd0f8;
  border-radius: 50%;
  background: radial-gradient(circle at 35% 30%, #6cc0f6, #1268d0);
`;

const TrayIcons = styled.div`
  display: flex;
  flex-direction: column;
  align-self: flex-start;
  gap: 2px;
  padding: 5px 0 0 2px;
`;

const Clock = styled.time`
  flex: 1;
  text-align: center;
  line-height: 19px;
  padding-right: 7px;
`;

const Flag = () => (
  <svg width="18" height="18" viewBox="0 0 18 18">
    <path d="M3 3q3-2 6 0L8 9Q5 7 1.500 9z" fill="#ee5a30" /><path d="M10 3.500q3 2 7 0L15.500 9q-3 2-6.500.500z" fill="#86c440" />
    <path d="M1.500 10Q5 8 7.800 10l-1.300 6Q4 14 0 16z" fill="#5a9af0" /><path d="M8.800 10.500q3 2 6.500 0L14 16q-3 2-6.500.500z" fill="#fbc92c" />
  </svg>
);

function Taskbar() {
  return (
    <TaskbarRoot>
      <StartButton><Flag />start</StartButton>
      <QuickLaunch>
        <button aria-label="mRemote">
          <svg width="16" height="16"><rect width="16" height="16" rx="2" fill="#181818" /><path d="M2 12V8h4v4M4 8v4" fill="none" stroke="#b6cf2a" strokeWidth="1.300" /><path d="M8.500 12V4.500h4v3.500h-4M11 8l2 4" fill="none" stroke="#fff" strokeWidth="1.800" /></svg>
        </button>
        <button aria-label="Show Desktop">
          <svg width="16" height="16"><rect x="1" y="2" width="12" height="12" rx="2" fill="#eaf4fc" stroke="#4a94d4" /><path d="M4 5h6M4 8h5M4 11h6" stroke="#2a7ac8" strokeWidth="1.500" /><path d="M14 2L8 10" stroke="#39a0e8" strokeWidth="2" /><path d="M12 9h3" stroke="#e24a20" strokeWidth="2" /></svg>
        </button>
        <button aria-label="Media Player">
          <svg width="16" height="16"><circle cx="8" cy="8" r="6.300" fill="#eef3f8" stroke="#f0b02a" strokeWidth="3" /><path d="M2 8a6 6 0 0 1 6-6" fill="none" stroke="#e2502a" strokeWidth="3" /><path d="M14 8a6 6 0 0 1-6 6" fill="none" stroke="#4aa83a" strokeWidth="3" /><path d="M6 5v6l5-3z" fill="#222" /></svg>
        </button>
        <button aria-label="Thunderbird">
          <svg width="16" height="16"><circle cx="8" cy="8" r="7" fill="#23528c" /><path d="M3 7l10-1 1 6q-5 4-10 1z" fill="#e9dcc4" /><path d="M3 8q3 3 9-1M1 4q6-5 13 1" fill="none" stroke="#7ab0dc" strokeWidth="1.500" /></svg>
        </button>
        <button aria-label="Internet Explorer"><IeIcon /></button>
        <button aria-label="Firefox">
          <svg width="16" height="16"><circle cx="8" cy="8.500" r="7" fill="#e8701a" /><circle cx="8.500" cy="6.500" r="4" fill="#2d6ab8" /><path d="M1 2q3 4 7 5l-1 4q4 1 6-2-1 5-5 5.500-6 0-7-6z" fill="#f09a28" /></svg>
        </button>
      </QuickLaunch>
      <QuickMore aria-label="More quick launch">»</QuickMore>
      <Tasks>
        <Task>
          <svg width="16" height="16"><circle cx="8" cy="8" r="7" fill="#4a3f86" /><path d="M1 6.500h14M1 9.500h14" stroke="#e4dcf0" strokeWidth="1.300" /><path d="M3 4q5-5 10 0z" fill="#b88ab0" /></svg>
          Java - Columbia_auto...
        </Task>
        <Task>
          <svg width="16" height="12"><path d="M0 0h16v12H0z" fill="#000" /><path d="M0 0h16v2H0z" fill="#4a8ae8" /><path d="M6 4.500H3v4h3M8 5v1M8 8v1M10 4l3 5" fill="none" stroke="#fff" /></svg>
          C:\WINDOWS\syste...
        </Task>
        <Task>
          <svg width="16" height="12"><path d="M0 0h16v12H0z" fill="#fff" /><path d="M0 0h16v2H0z" fill="#2f7ae0" /></svg>
          Selenium Remote Con...
        </Task>
        <Task><IeIcon />Qumu VCC : Program...</Task>
        <Task><IeIcon />Qumu VCC : Live Bro...</Task>
        <Task $on><IeIcon />Qumu Program Player...</Task>
      </Tasks>
      <Tray>
        <TrayToggle aria-label="Hide icons">
          <svg width="8" height="8"><path d="M6 0L2 4l4 4" fill="none" stroke="#fff" strokeWidth="2" /></svg>
        </TrayToggle>
        <TrayIcons>
          <svg width="16" height="16"><path d="M5 0h7v6H5zM0 8h8v6H0z" fill="#36c25a" stroke="#0a5a2a" /><rect x="9" y="7" width="7" height="8" rx="1" fill="#f5c83a" stroke="#8a5a10" /><path d="M12 10v3" stroke="#333" strokeWidth="1.500" /></svg>
          <svg width="16" height="16"><path d="M5 1h9v7H5z" fill="#7ab6ee" stroke="#dbe9f8" /><path d="M1 5h8v6H1z" fill="#4a94e4" stroke="#dbe9f8" /><path d="M2 12h7l1 3H1zM10 9h4v4h-3z" fill="#c6cfe8" /></svg>
        </TrayIcons>
        <Clock>11:55 AM<br />Friday<br />7/1/2011</Clock>
      </Tray>
    </TaskbarRoot>
  );
}

export default function App() {
  return (
    <Desktop>
      <GlobalStyle />
      <Workspace>
        <ProgramsWindow />
        <ConsoleWindow />
        <PlayerWindow />
      </Workspace>
      <Taskbar />
    </Desktop>
  );
}
